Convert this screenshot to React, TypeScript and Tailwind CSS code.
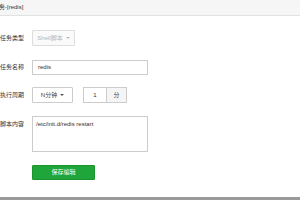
import React from 'react';

const font = { fontFamily: '"Liberation Sans", "Noto Sans CJK SC", sans-serif' };

const Label: React.FC<{ text: string; className?: string }> = ({ text, className = '' }) => (
  <div className={`w-[24px] shrink-0 text-right whitespace-nowrap overflow-visible flex justify-end text-[6px] text-[#333] ${className}`}>
    {text}
  </div>
);

const Caret: React.FC<{ color?: string }> = ({ color = 'border-t-[#555]' }) => (
  <span className={`ml-[3px] inline-block w-0 h-0 border-x-[2px] border-x-transparent border-t-[2px] ${color}`} />
);

const App: React.FC = () => {
  return (
    <div className="w-[300px] h-[200px] bg-white overflow-hidden flex flex-col" style={font}>
      {/* Header */}
      <div className="h-[16px] shrink-0 bg-[#f6f6f6] border-b border-[#e2e2e2] flex items-center overflow-hidden">
        <span className="ml-[-19px] text-[6px] text-[#333] whitespace-nowrap">编辑任务-[redis]</span>
      </div>

      <div className="flex-1 flex flex-col">
        {/* 任务类型 */}
        <div className="mt-[14px] flex items-center gap-[8px]">
          <Label text="任务类型" />
          <div className="w-[43px] h-[16px] border border-[#ddd] bg-[#fafafa] rounded-[1px] flex items-center justify-center text-[6px] text-[#b5b5b5]">
            Shell脚本
            <Caret color="border-t-[#bbb]" />
          </div>
        </div>

        {/* 任务名称 */}
        <div className="mt-[14px] flex items-center gap-[8px]">
          <Label text="任务名称" />
          <div className="w-[116px] h-[15px] border border-[#ccc] bg-white flex items-center px-[5px] text-[6px] text-[#333]">
            redis
          </div>
        </div>

        {/* 执行周期 */}
        <div className="mt-[12px] flex items-center gap-[8px]">
          <Label text="执行周期" />
          <div className="w-[41px] h-[16px] border border-[#ccc] bg-white rounded-[1px] flex items-center justify-center text-[6px] text-[#444]">
            N分钟
            <Caret />
          </div>
          <div className="ml-[2px] flex h-[16px]">
            <div className="w-[24px] border border-[#ccc] bg-white flex items-center justify-center text-[6px] text-[#333]">
              1
            </div>
            <div className="w-[20px] border border-l-0 border-[#ccc] bg-[#f5f5f5] flex items-center justify-center text-[6px] text-[#444]">
              分
            </div>
          </div>
        </div>

        {/* 脚本内容 */}
        <div className="mt-[13px] flex items-start gap-[8px]">
          <Label text="脚本内容" className="mt-[4px]" />
          <div className="w-[116px] h-[36px] border border-[#ccc] bg-white px-[3px] pt-[3px] text-[6px] leading-[8px] text-[#333]">
            /etc/init.d/redis restart
          </div>
        </div>

        {/* 保存 */}
        <div className="mt-[13px] flex items-center gap-[8px]">
          <div className="w-[24px]" />
          <button className="w-[63px] h-[15px] bg-[#20a53a] border border-[#1a9431] rounded-[1px] flex items-center justify-center text-[6px] text-white">
            保存编辑
          </button>
        </div>
      </div>

      <div className="h-[3px] shrink-0 bg-[#9a9a9a]" />
    </div>
  );
};

export default App;
